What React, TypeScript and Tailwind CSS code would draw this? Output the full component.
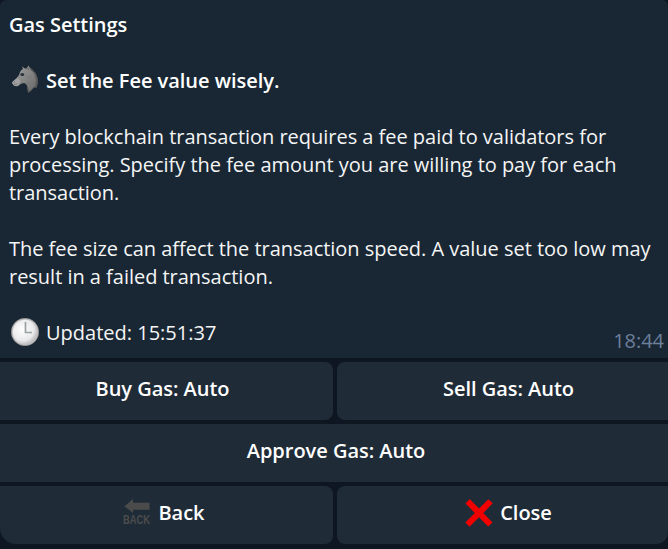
import type { ReactNode } from "react";

function HorseIcon() {
    return (
        <svg className="-mt-1 w-7 h-7 shrink-0" viewBox="0 0 28 28">
            <defs>
                <linearGradient id="coat" x1="0" y1="0" x2="1" y2="1">
                    <stop offset="0" stopColor="#a2a2a2" />
                    <stop offset="1" stopColor="#6c6c6c" />
                </linearGradient>
            </defs>
            <path d="M18 1.5L21.5 4.5L25 8.5L27 14L26.8 19L25.5 23L23 22.5L20 26L17 28L16 23Z" fill="#5c5b5b" />
            <path d="M17.5 0.5L19.5 5C24 8 25 14 23.5 19L22 23L18 26C18 23.5 16.5 21 14.5 18.5C12 18 10 18.5 8.5 20C7 21.5 5 22 2.5 20L1 17.5C2.5 15.5 6 13.5 8 10C9 7 9.5 5 12 4L11 1.5L14 3.5L15.5 3.5Z" fill="url(#coat)" />
            <path d="M1 17.5C3 15 5 14 7 13.5L9.5 16L7.5 20C5.5 21.5 3.5 21.5 2 19.5Z" fill="#a3a3a3" />
            <path d="M15 11C17 14 19 14 19.5 10M14.5 18.5C17 19 19.5 17.5 20.5 15M22 7C25 12 25 17 23 22" fill="none" stroke="#777" strokeWidth="1" />
            <path d="M17.3 2L17.8 5L16 4.5Z" fill="#625d5d" />
            <ellipse cx="11.3" cy="9.5" rx="1.9" ry="1.5" fill="#26323b" />
            <ellipse cx="3.5" cy="17" rx="0.8" ry="0.6" fill="#606060" />
            <path d="M2.5 19.8L6.5 18.8" stroke="#707070" strokeWidth="0.8" />
        </svg>
    );
}

function ClockIcon() {
    return (
        <svg className="-mt-0.5 w-7 h-7 shrink-0" viewBox="0 0 28 28">
            <defs>
                <radialGradient id="face" cx="0.4" cy="0.4" r="0.65">
                    <stop offset="0" stopColor="#ffffff" />
                    <stop offset="0.7" stopColor="#e9e8ea" />
                    <stop offset="1" stopColor="#b7b5b7" />
                </radialGradient>
            </defs>
            <circle cx="14" cy="14" r="13.7" fill="#c4c2c3" stroke="#8d8d8d" strokeWidth="0.6" />
            <circle cx="14" cy="14" r="12.2" fill="url(#face)" />
            <path d="M14.5 4V14.5H21" fill="none" stroke="#9aa3a1" strokeWidth="1.7" />
        </svg>
    );
}

function BackIcon() {
    return (
        <svg className="w-7 h-7 shrink-0 overflow-visible" viewBox="0 0 28 28">
            <path d="M1.5 7.2L10 0V3.8H26.5V10.8H10V14Z" fill="#4b4b4b" />
            <text x="0" y="25.3" textLength="27" lengthAdjust="spacingAndGlyphs" fontFamily="Liberation Sans, sans-serif" fontSize="12.5" fontWeight="700" fill="#4b4b4b">BACK</text>
        </svg>
    );
}

function CrossIcon() {
    return (
        <svg className="w-7 h-7 shrink-0" viewBox="0 0 28 28">
            <path d="M4.7 0L14 9.6L23.3 0.2L27.8 4.2L18.3 14L27.5 23.5L23.2 27.5L14 18.2L4.6 27.7L0.3 23.4L9.8 14L0.5 4.4Z" fill="#f00000" />
        </svg>
    );
}

function KeyButton({ children, className = "" }: { children: ReactNode; className?: string }) {
    return (
        <button className={`flex h-[58px] items-center justify-center gap-[7px] bg-[#1f2c38] pb-1 text-xl font-semibold text-white ${className}`}>
            {children}
        </button>
    );
}

export default function App() {
    return (
        <div className="flex h-[549px] w-[668px] flex-col overflow-hidden bg-[#0e1621] font-['Open_Sans',sans-serif] text-xl leading-7 tracking-[-0.025px] text-white">
            {/* Message */}
            <div className="flex h-[358px] shrink-0 justify-between rounded-t-[6px] bg-[#192734] pt-[11px] pl-[9px] pr-1">
                <div className="whitespace-nowrap text-[#f5f5f5]">
                    <h1 className="font-semibold text-white">Gas Settings</h1>
                    <div className="mt-7 flex h-7 items-center gap-[7px] pl-0.5 font-semibold text-white">
                        <HorseIcon />
                        Set the Fee value wisely.
                    </div>
                    <p className="mt-7">
                        Every blockchain transaction requires a fee paid to validators for<br />
                        processing. Specify the fee amount you are willing to pay for each<br />
                        transaction.
                    </p>
                    <p className="mt-7">
                        The fee size can affect the transaction speed. A value set too low may<br />
                        result in a failed transaction.
                    </p>
                    <div className="mt-7 flex h-7 items-center gap-[7px] pl-0.5 tracking-normal">
                        <ClockIcon />
                        Updated: 15:51:37
                    </div>
                </div>
                <time className="-ml-14 self-end pb-[3px] text-[#6c7f9b]">18:44</time>
            </div>

            {/* Keyboard */}
            <div className="mt-1 grid grid-cols-[333px_331px] gap-1">
                <KeyButton className="rounded-r-lg pr-2">Buy Gas: Auto</KeyButton>
                <KeyButton className="rounded-l-lg pl-3">Sell Gas: Auto</KeyButton>
                <KeyButton className="col-span-2 pl-1">Approve Gas: Auto</KeyButton>
                <KeyButton className="rounded-r-lg rounded-bl-[16px] pr-[5px]">
                    <BackIcon />
                    Back
                </KeyButton>
                <KeyButton className="rounded-l-lg rounded-br-[12px] pl-3">
                    <CrossIcon />
                    Close
                </KeyButton>
            </div>
        </div>
    );
}
